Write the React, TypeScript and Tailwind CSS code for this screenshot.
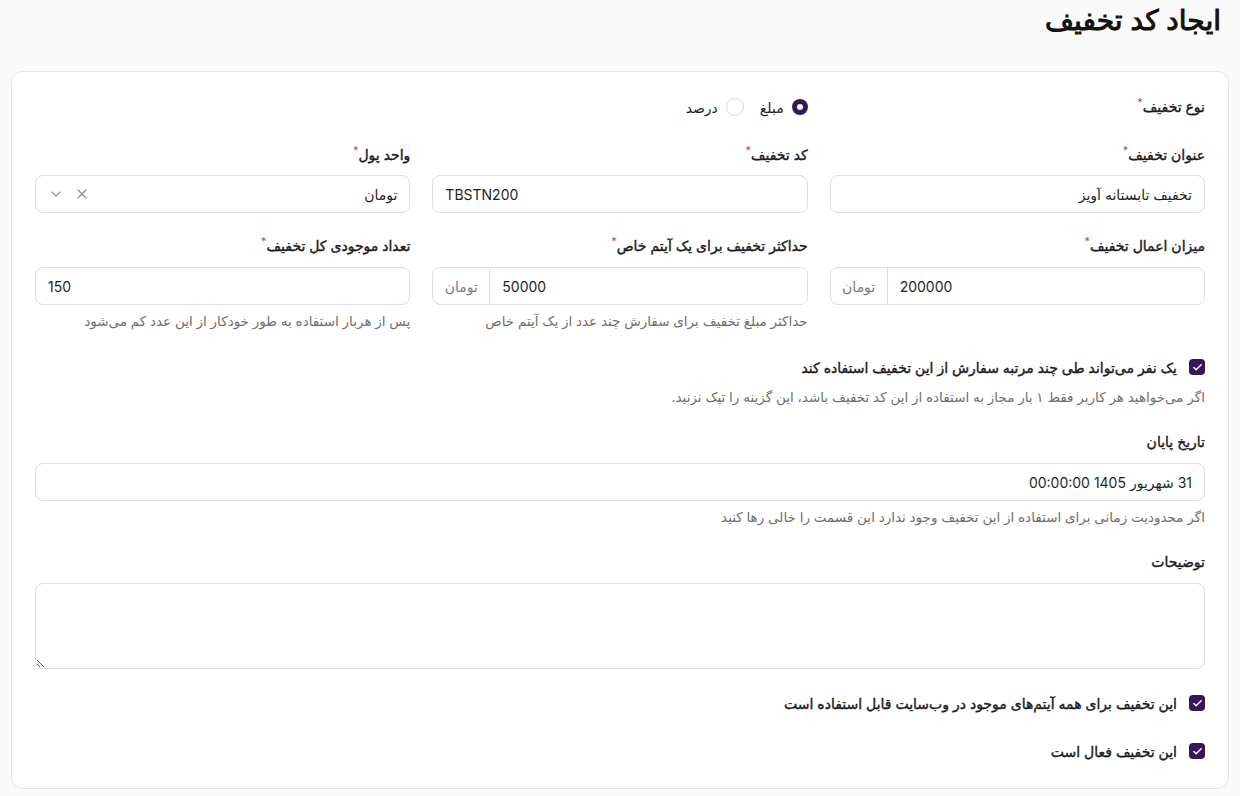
import React from "react";
import { X, ChevronDown, Check } from "lucide-react";

const Label = ({ text, required }: { text: string; required?: boolean }) => (
  <div className="flex items-start h-5 text-[14px] leading-5 font-normal [-webkit-text-stroke:0.4px] text-[#1c1c1c]">
    <span>{text}</span>
    {required && <span className="text-[#e23b3b] text-[11px] leading-3 -mt-[1px] [-webkit-text-stroke:0px]">*</span>}
  </div>
);

const Helper = ({ children }: { children: React.ReactNode }) => (
  <p className="text-[13.5px] leading-4 text-[#6f6f6f]">{children}</p>
);

const TextInput = ({ value, ltr }: { value: string; ltr?: boolean }) => (
  <input
    defaultValue={value}
    dir={ltr ? "ltr" : "rtl"}
    className="w-full h-[38px] rounded-lg border border-[#dedede] bg-white px-3 text-[14px] text-[#1f1f1f] outline-none"
  />
);

const AddonInput = ({ value }: { value: string }) => (
  <div className="flex h-[38px] w-full rounded-lg border border-[#dedede] bg-white overflow-hidden">
    <input
      defaultValue={value}
      dir="ltr"
      className="flex-1 min-w-0 px-3 text-[14px] text-[#1f1f1f] outline-none bg-white"
    />
    <div className="w-[57px] shrink-0 flex items-center justify-center border-r border-[#dedede] text-[14px] text-[#7a7a7a]">
      تومان
    </div>
  </div>
);

const Checkbox = ({ label }: { label: string }) => (
  <div className="flex items-center gap-3 h-5">
    <span className="w-4 h-4 rounded-[4px] bg-[#33195c] flex items-center justify-center">
      <Check size={11} strokeWidth={3} className="text-white" />
    </span>
    <span className="text-[14px] [-webkit-text-stroke:0.4px] text-[#1c1c1c]">{label}</span>
  </div>
);

export default function App() {
  return (
    <div
      dir="rtl"
      className="min-h-[796px] bg-[#fafafa] px-[11px] pt-[3px] pb-[8px]"
      style={{ fontFamily: '"Inter", "DejaVu Sans", sans-serif' }}
    >
      <h1 className="text-[28px] leading-[34px] font-normal [-webkit-text-stroke:1px] text-[#111] pr-[8px]">ایجاد کد تخفیف</h1>

      <div className="mt-[34px] rounded-xl border border-[#e3e3e3] bg-white px-[23px] pt-[23px] pb-[27px]">
        {/* type */}
        <div className="grid grid-cols-3 gap-x-[22px] h-6 items-center">
          <Label text="نوع تخفیف" required />
          <div className="flex items-center gap-4">
            <label className="flex items-center gap-2">
              <span className="w-4 h-4 rounded-full bg-[#33195c] flex items-center justify-center">
                <span className="w-[6px] h-[6px] rounded-full bg-white" />
              </span>
              <span className="text-[14px] text-[#1c1c1c]">مبلغ</span>
            </label>
            <label className="flex items-center gap-2">
              <span className="w-[18px] h-[18px] rounded-full border border-[#dcdcdc] bg-white" />
              <span className="text-[14px] text-[#1c1c1c]">درصد</span>
            </label>
          </div>
        </div>

        {/* row 2 */}
        <div className="grid grid-cols-3 gap-x-[22px] mt-[26px]">
          <div className="flex flex-col gap-[10px]">
            <Label text="عنوان تخفیف" required />
            <TextInput value="تخفیف تابستانه آویز" />
          </div>
          <div className="flex flex-col gap-[10px]">
            <Label text="کد تخفیف" required />
            <TextInput value="TBSTN200" ltr />
          </div>
          <div className="flex flex-col gap-[10px]">
            <Label text="واحد پول" required />
            <div className="flex items-center h-[38px] rounded-lg border border-[#dedede] bg-white px-3 text-[14px] text-[#1f1f1f]">
              <span className="flex-1">تومان</span>
              <X size={16} strokeWidth={1.6} className="text-[#8a8a8a]" />
              <ChevronDown size={16} strokeWidth={1.6} className="text-[#8a8a8a] mr-[10px]" />
            </div>
          </div>
        </div>

        {/* row 3 */}
        <div className="grid grid-cols-3 gap-x-[22px] mt-[23px]">
          <div className="flex flex-col gap-[11px]">
            <Label text="میزان اعمال تخفیف" required />
            <AddonInput value="200000" />
          </div>
          <div className="flex flex-col">
            <Label text="حداکثر تخفیف برای یک آیتم خاص" required />
            <div className="mt-[11px]">
              <AddonInput value="50000" />
            </div>
            <div className="mt-[8px]">
              <Helper>حداکثر مبلغ تخفیف برای سفارش چند عدد از یک آیتم خاص</Helper>
            </div>
          </div>
          <div className="flex flex-col">
            <Label text="تعداد موجودی کل تخفیف" required />
            <div className="mt-[11px]">
              <TextInput value="150" ltr />
            </div>
            <div className="mt-[8px]">
              <Helper>پس از هربار استفاده به طور خودکار از این عدد کم می‌شود</Helper>
            </div>
          </div>
        </div>

        {/* multi use */}
        <div className="mt-[28px]">
          <Checkbox label="یک نفر می‌تواند طی چند مرتبه سفارش از این تخفیف استفاده کند" />
          <div className="mt-3">
            <Helper>اگر می‌خواهید هر کاربر فقط ۱ بار مجاز به استفاده از این کد تخفیف باشد، این گزینه را تیک نزنید.</Helper>
          </div>
        </div>

        {/* end date */}
        <div className="mt-[27px] flex flex-col">
          <Label text="تاریخ پایان" />
          <div className="mt-[11px]">
            <TextInput value="31 شهریور 1405 00:00:00" />
          </div>
          <div className="mt-[8px]">
            <Helper>اگر محدودیت زمانی برای استفاده از این تخفیف وجود ندارد این قسمت را خالی رها کنید</Helper>
          </div>
        </div>

        {/* description */}
        <div className="mt-[27px] flex flex-col">
          <Label text="توضیحات" />
          <textarea className="mt-[11px] h-[86px] w-full rounded-lg border border-[#dedede] bg-white px-3 py-2 text-[14px] outline-none" />
        </div>

        <div className="mt-[24px]">
          <Checkbox label="این تخفیف برای همه آیتم‌های موجود در وب‌سایت قابل استفاده است" />
        </div>
        <div className="mt-[28px]">
          <Checkbox label="این تخفیف فعال است" />
        </div>
      </div>
    </div>
  );
}
